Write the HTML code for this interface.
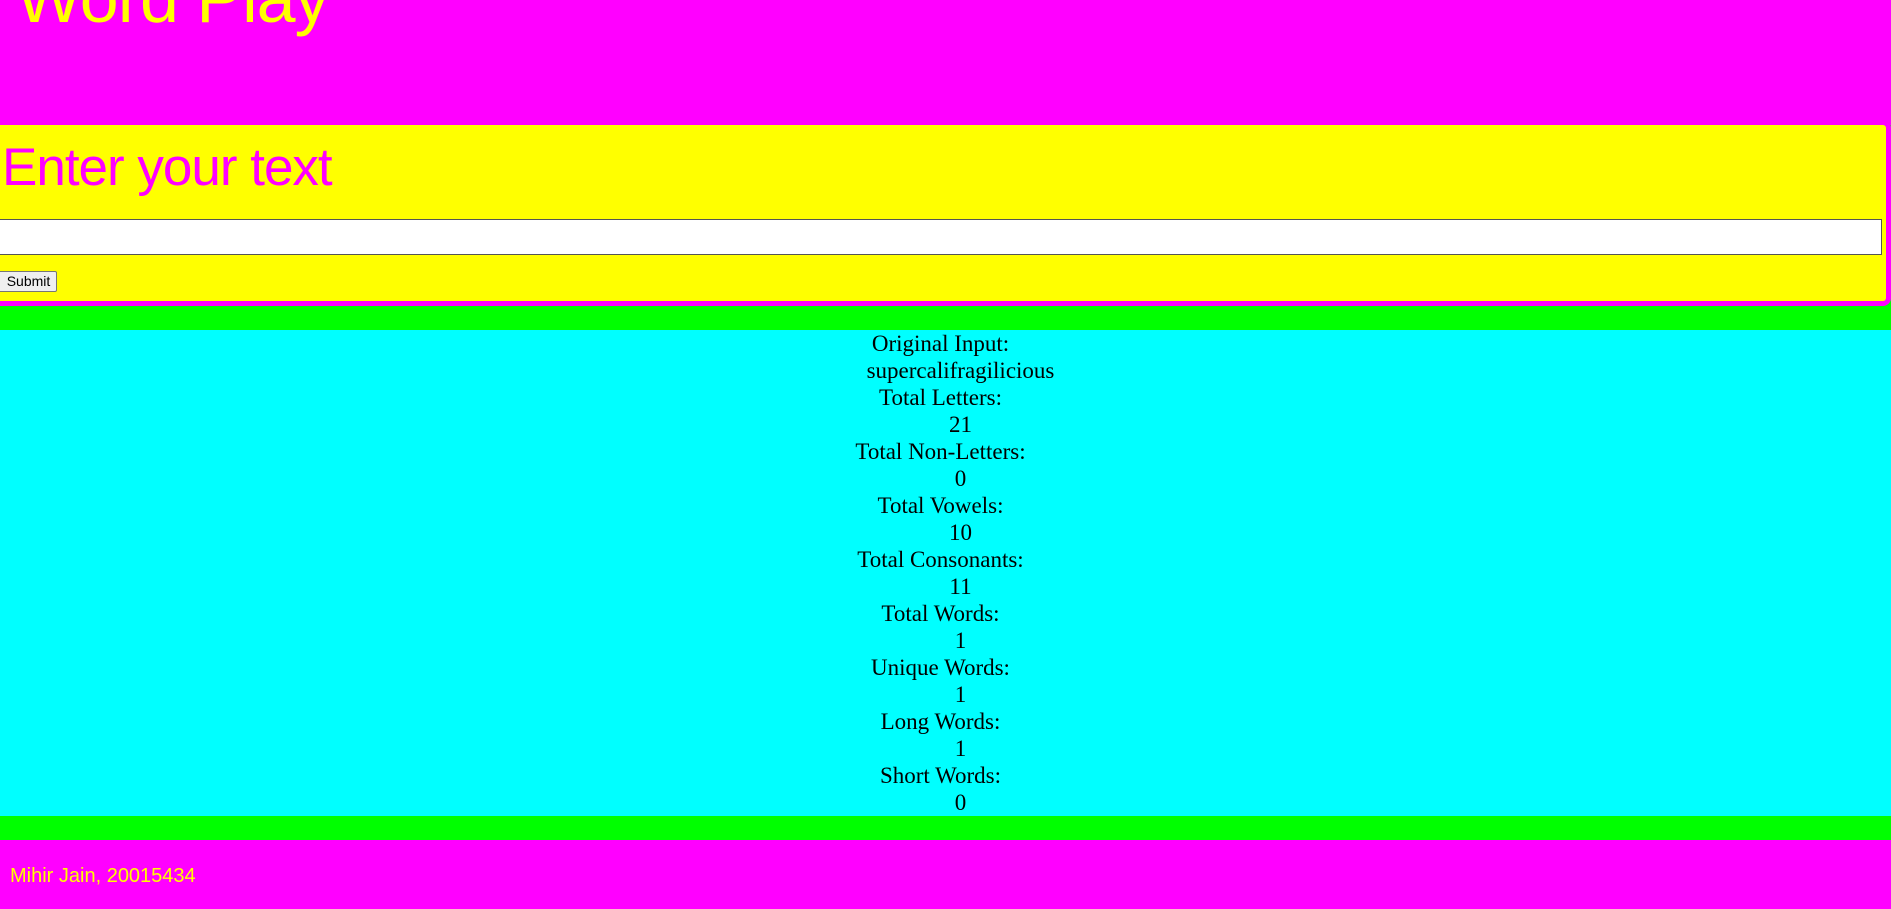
<!DOCTYPE html>
<html><head><style>
html,body{margin:0;padding:0;width:1891px;height:909px;overflow:hidden;background:#00ff00;}
.hdr{position:absolute;left:0;top:0;width:1891px;height:125px;background:#ff00ff;}
.hdr h1{position:absolute;left:16px;top:-42px;margin:0;font:70px "Liberation Sans",sans-serif;color:#ffff00;letter-spacing:-1px;}
.box{position:absolute;left:-10px;top:120px;width:1896px;height:176px;background:#ffff00;border:5px solid #ff00ff;border-left:none;border-radius:0 8px 8px 0;}
.box h2{position:absolute;left:12px;top:12px;margin:0;font:53px "Liberation Sans",sans-serif;color:#ff00ff;letter-spacing:-1px;}
.ta{position:absolute;left:0;top:94px;width:1892px;height:36px;background:#fff;border:1px solid #555;box-sizing:border-box;}
.btn{position:absolute;left:0;top:146px;width:67px;height:21px;background:#efefef;border:1px solid #767676;border-radius:2px;font:14px "Liberation Sans",sans-serif;text-align:center;line-height:19px;box-sizing:border-box;padding-left:10px;}
.res{position:absolute;left:0;top:330px;width:1891px;height:486px;background:#00ffff;text-align:center;font:23px/27px "Liberation Serif",serif;color:#000;}
.res .l{margin-right:10px}
.res .v{margin-left:30px}
.ft{position:absolute;left:0;top:840px;width:1891px;height:69px;background:#ff00ff;}
.ft span{position:absolute;left:10px;top:25px;font:20px "Liberation Sans",sans-serif;color:#ffff00;}
</style></head><body>
<div class="hdr"><h1>Word Play</h1></div>
<div class="box"><h2>Enter your text</h2><div class="ta"></div><div class="btn">Submit</div></div>
<div class="res">
<div class="l">Original Input:</div><div class="v">supercalifragilicious</div>
<div class="l">Total Letters:</div><div class="v">21</div>
<div class="l">Total Non-Letters:</div><div class="v">0</div>
<div class="l">Total Vowels:</div><div class="v">10</div>
<div class="l">Total Consonants:</div><div class="v">11</div>
<div class="l">Total Words:</div><div class="v">1</div>
<div class="l">Unique Words:</div><div class="v">1</div>
<div class="l">Long Words:</div><div class="v">1</div>
<div class="l">Short Words:</div><div class="v">0</div>
</div>
<div class="ft"><span>Mihir Jain, 20015434</span></div>
</body></html>
